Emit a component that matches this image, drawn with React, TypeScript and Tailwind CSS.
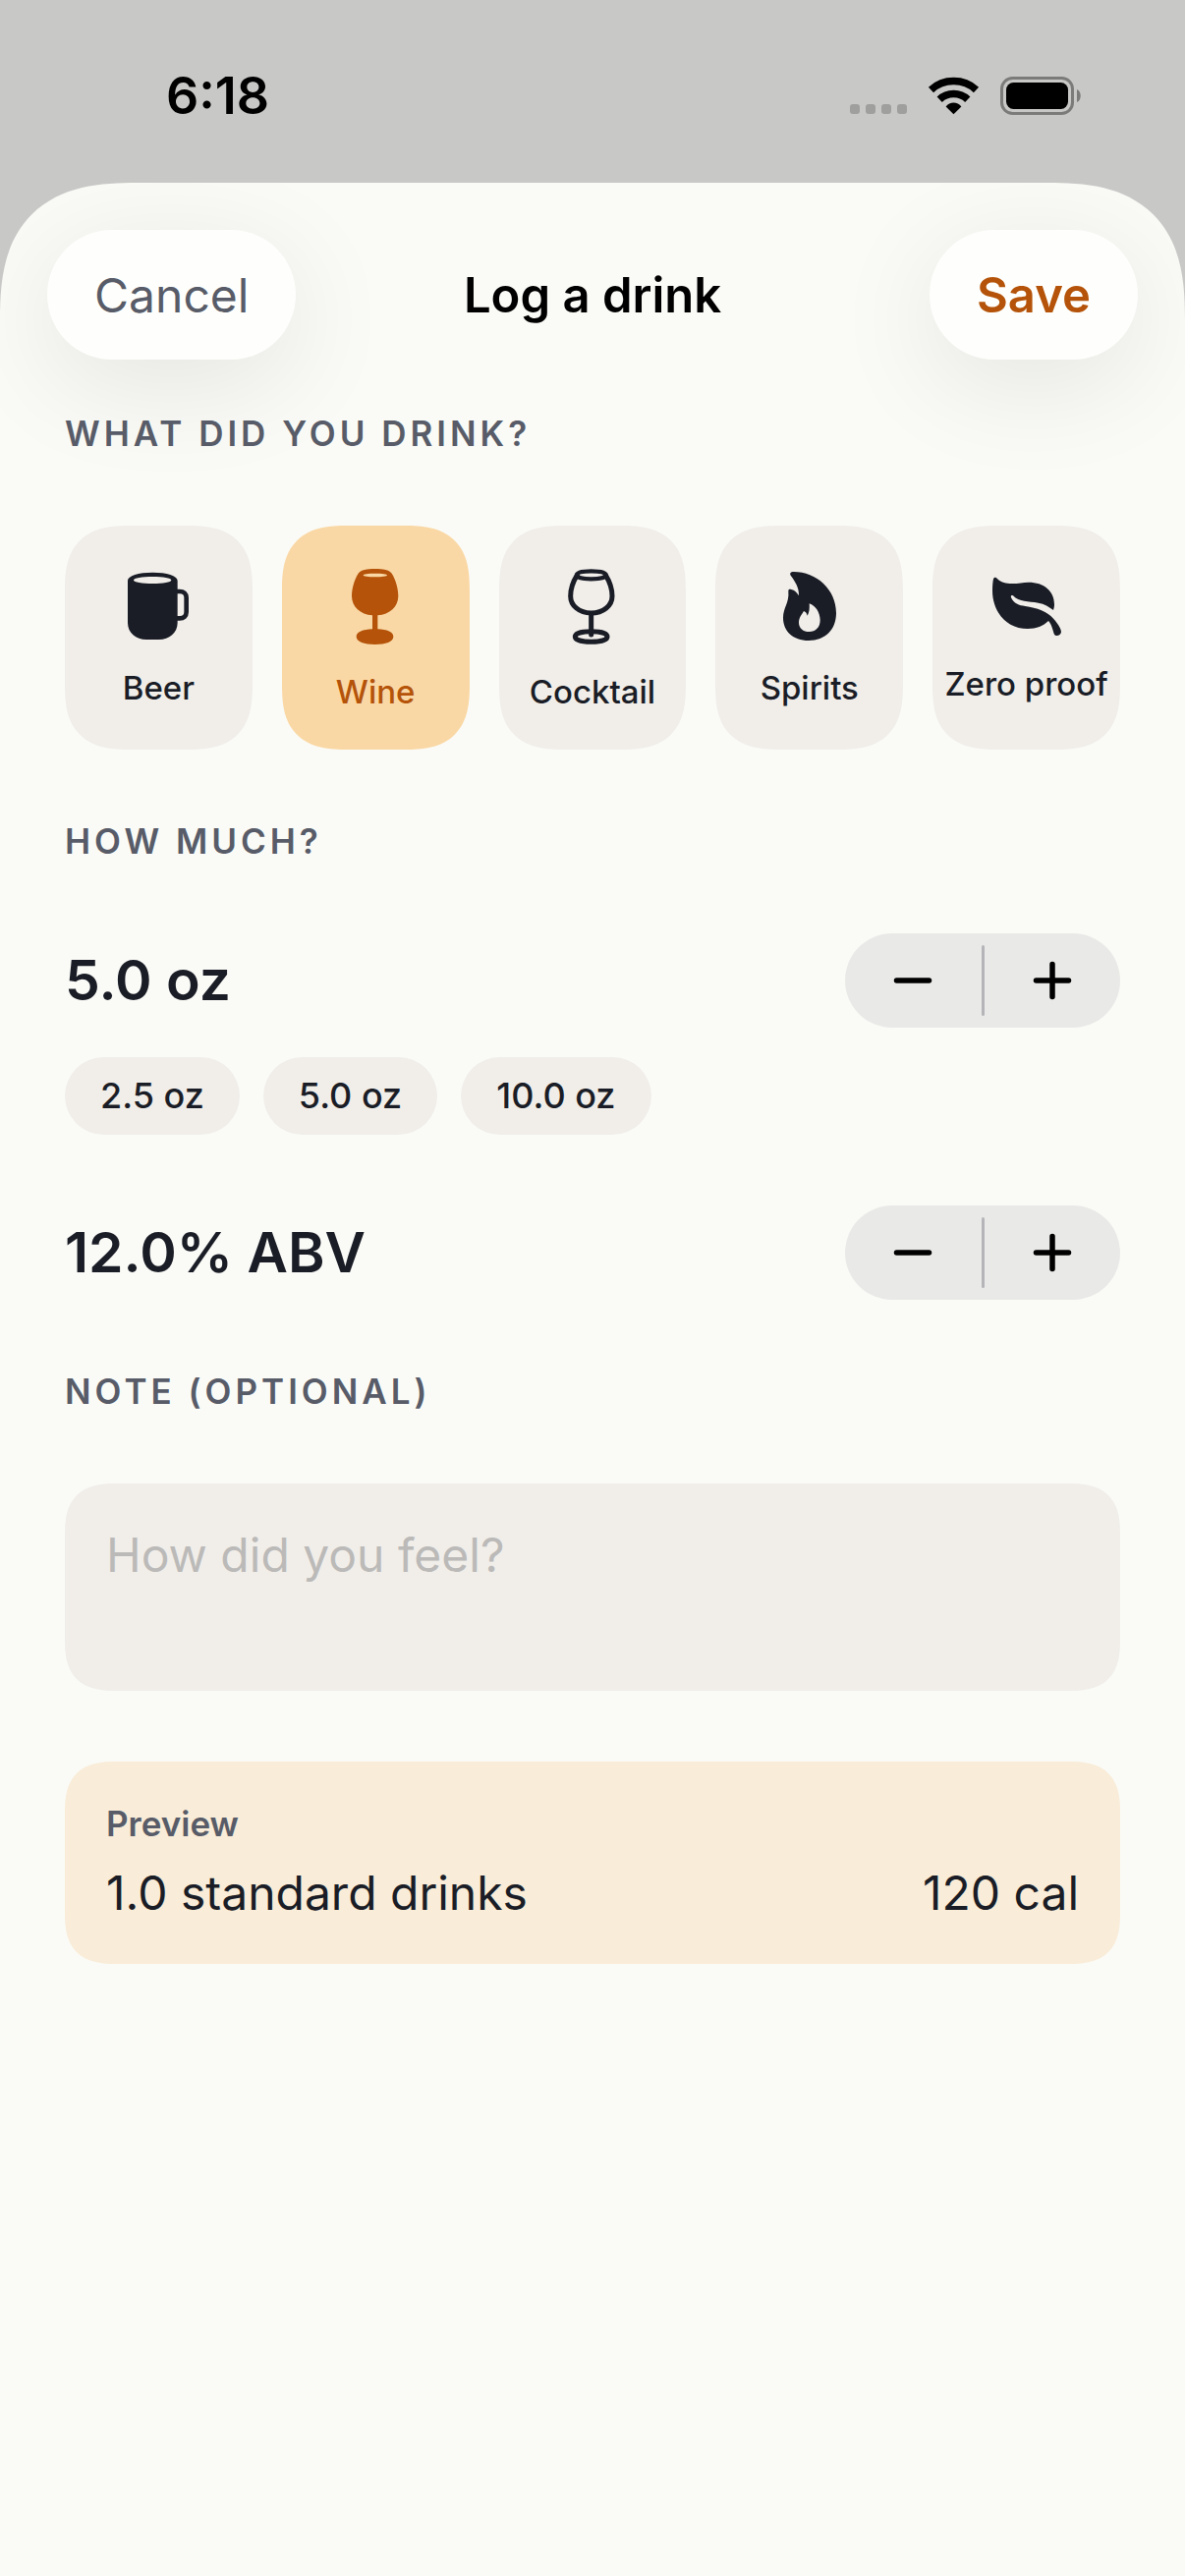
import React, { useState } from "react";
import clsx from "clsx";

const BeerIcon = () => (
  <svg className="w-[85px] h-[85px]" viewBox="0 0 255 255" fill="none">
    <path
      fill="currentColor"
      fillRule="evenodd"
      d="M33 39C33 24 66 14 109 14C152 14 185 24 185 39V168C185 198 160 219 128 219H90C58 219 33 198 33 168ZM51 37.500C51 44 77 48 109 48C141 48 166 44 166 37.500C166 31 141 27 109 27C77 27 51 31 51 37.500Z"
    />
    <path
      stroke="currentColor"
      strokeWidth="14"
      d="M183 72H192C204 72 212 80 212 91V135C212 147 204 154 192 154H183"
    />
  </svg>
);

const WineIcon = () => (
  <svg className="w-[85px] h-[93px]" viewBox="0 0 255 279" fill="currentColor">
    <path
      fillRule="evenodd"
      d="M125 15C150 15 168 18 175 28C190 50 196 80 196 98C196 130 170 154 133 157V199C162 200 181 208 181 222C181 238 158 246 125 246C92 246 68 238 68 222C68 208 88 200 117 199V157C80 154 54 130 54 98C54 80 60 50 75 28C82 18 100 15 125 15ZM89 34.500C89 38 105 40 125 40C146 40 162 38 162 34.500C162 31 146 29 125 29C105 29 89 31 89 34.500Z"
    />
  </svg>
);

const CocktailIcon = () => (
  <svg
    className="w-[85px] h-[93px]"
    viewBox="0 0 255 279"
    fill="none"
    stroke="currentColor"
    strokeWidth="15"
    strokeLinecap="round"
  >
    <path d="M82 34C69 55 62 80 62 98C62 127 88 150 125 150C162 150 189 127 189 98C189 80 182 55 169 34" />
    <path
      strokeWidth="13"
      d="M81 34C81 25 100 22 125 22C150 22 170 25 170 34C170 42 150 46 125 46C100 46 81 42 81 34Z"
    />
    <path d="M125 154V216" />
    <path d="M76 222C76 212 97 206 125 206C154 206 174 212 174 222C174 232 154 238 125 238C97 238 76 232 76 222Z" />
  </svg>
);

const SpiritsIcon = () => (
  <svg className="w-[85px] h-[85px]" viewBox="0 0 255 255" fill="currentColor">
    <path
      fillRule="evenodd"
      d="M71 23C67 16 72 12 80 12C150 12 210 66 210 138C210 188 177 222 126 222C78 222 48 193 48 153C48 121 67 108 64 73C63 65 68 65 73 66C83 68 91 76 96 85C97 60 85 42 71 23ZM128 109C147 115 161 137 161 160C161 182 147 195 128 195C109 195 96 184 96 167C96 151 107 140 111 132C117 134 120 138 122 146C128 137 129 124 128 109Z"
    />
  </svg>
);

const LeafIcon = () => (
  <svg className="w-[85px] h-[77px]" viewBox="0 0 255 231" fill="currentColor">
    <path d="M27 22C28 17 34 15 38 20C48 32 62 36 84 36C104 36 118 32 134 32C182 32 213 59 213 99C213 107 212 111 210 117C197 107 183 98 164 95C134 90 106 93 87 73C83 70 79 73 81 79C89 97 106 103 124 105C160 110 192 121 211 144C224 159 234 174 234 184C233 196 215 199 212 189C208 176 204 159 195 150C179 166 159 174 132 174C69 174 24 124 24 57C24 44 25 32 27 22Z" />
  </svg>
);

const drinks = [
  { name: "Beer", icon: BeerIcon },
  { name: "Wine", icon: WineIcon },
  { name: "Cocktail", icon: CocktailIcon },
  { name: "Spirits", icon: SpiritsIcon },
  { name: "Zero proof", icon: LeafIcon },
];

const presets = [2.5, 5, 10];

const StatusBar = () => (
  <div className="h-[186px] flex items-start justify-between pl-[169px] pr-[105px] pt-[67px]">
    <span className="text-[52px] leading-[62px] font-semibold text-black">
      6:18
    </span>
    <svg className="w-[236px] h-[40px] mt-[11px]" viewBox="0 0 236 40">
      {/* Cellular */}
      <g fill="#9f9f9e">
        <rect x="0" y="28" width="10" height="10" rx="3" />
        <rect x="16" y="28" width="10" height="10" rx="3" />
        <rect x="32" y="28" width="10" height="10" rx="3" />
        <rect x="48" y="28" width="10" height="10" rx="3" />
      </g>
      {/* Wifi */}
      <path d="M105.500 38.200L97.600 30.500C101.500 25 109.500 25 113.400 30.500Z" />
      <g fill="none" stroke="#000" strokeWidth="7.500">
        <path d="M82.500 13.500C95 1.600 116 1.600 128.500 13.500" />
        <path d="M91.200 23.200C99 15.600 112 15.600 119.800 23.200" />
      </g>
      {/* Battery */}
      <rect x="154.500" y="1.500" width="72" height="36" rx="11" fill="none" stroke="#7b7b7a" strokeWidth="3" />
      <rect x="159" y="6" width="63" height="27" rx="7.500" />
      <path d="M231 13C236 15 236 24 231 26Z" fill="#7b7b7a" />
    </svg>
  </div>
);

type StepperProps = {
  label: string;
  onMinus: () => void;
  onPlus: () => void;
};

const Stepper: React.FC<StepperProps> = ({ label, onMinus, onPlus }) => (
  <div className="flex items-center w-[280px] h-24 rounded-full bg-[#e9e9e7]">
    <button
      type="button"
      aria-label={`Decrease ${label}`}
      className="flex-1 h-full flex items-center justify-center"
      onClick={onMinus}
    >
      <svg className="w-10 h-10" viewBox="0 0 40 40" fill="none" stroke="#000" strokeWidth="5.500" strokeLinecap="round">
        <path d="M3.500 20H36.500" />
      </svg>
    </button>
    <span className="w-[3px] h-[72px] rounded-full bg-[#b5b5b9]" />
    <button
      type="button"
      aria-label={`Increase ${label}`}
      className="flex-1 h-full flex items-center justify-center"
      onClick={onPlus}
    >
      <svg className="w-10 h-10" viewBox="0 0 40 40" fill="none" stroke="#000" strokeWidth="5.500" strokeLinecap="round">
        <path d="M3.500 20H36.500M20 3.500V36.500" />
      </svg>
    </button>
  </div>
);

const sectionLabel =
  "block text-[35px] leading-[43px] font-semibold tracking-[4px] uppercase text-[#585c68]";
const navButton =
  "h-[132px] px-12 rounded-full bg-[#fefffc] leading-[61px] shadow-[0_24px_112px_rgba(0,0,0,0.09)]";
// softer corners where the browser can draw them
const card =
  "rounded-[42px] supports-[corner-shape:round]:rounded-[52px] [corner-shape:superellipse(1.4)]";

export default function App() {
  const [drink, setDrink] = useState("Wine");
  const [volume, setVolume] = useState(5);
  const [abv, setAbv] = useState(12);
  const [note, setNote] = useState("");

  // one standard drink is 0.6 oz of pure alcohol
  const standard = (volume * abv) / 100 / 0.6;

  return (
    <div className="min-h-screen flex flex-col bg-[#c8c8c6] font-['Inter','Liberation_Sans',sans-serif] text-[#1a1d26]">
      <StatusBar />

      <div className="flex-1 bg-[#fafbf7] rounded-t-[114px] supports-[corner-shape:round]:rounded-t-[140px] [corner-shape:superellipse(1.4)] overflow-hidden">
        {/* Header */}
        <header className="grid grid-cols-[1fr_auto_1fr] items-center px-12 pt-12">
          <button type="button" className={clsx(navButton, "justify-self-start text-[48px] text-[#585c68]")}>
            Cancel
          </button>
          <h1 className="text-[49px] leading-[61px] font-semibold text-black">
            Log a drink
          </h1>
          <button type="button" className={clsx(navButton, "justify-self-end text-[49px] font-semibold text-[#b45309]")}>
            Save
          </button>
        </header>

        <main className="relative flex flex-col gap-18 px-[66px] pt-[54px] pb-24">
          <h2 className={sectionLabel}>What did you drink?</h2>

          {/* Drink type */}
          <div className="grid grid-cols-5 gap-[30px]">
            {drinks.map(({ name, icon: Icon }) => (
              <button
                key={name}
                type="button"
                aria-pressed={drink === name}
                className={clsx(
                  "h-[228px] flex flex-col items-center justify-center gap-[18px] rounded-[54px] supports-[corner-shape:round]:rounded-[66px] [corner-shape:superellipse(1.4)]",
                  drink === name
                    ? "bg-[#fad8a5] text-[#b45309]"
                    : "bg-[#f1eeea]"
                )}
                onClick={() => setDrink(name)}
              >
                <Icon />
                <span className="text-[33px] leading-[39px] font-medium whitespace-nowrap">
                  {name}
                </span>
              </button>
            ))}
          </div>

          <h2 className={sectionLabel}>How much?</h2>

          {/* Volume */}
          <div className="flex flex-col gap-[30px]">
            <div className="flex items-center justify-between">
              <span className="text-[57px] leading-[72px] font-semibold">
                {volume.toFixed(1)} oz
              </span>
              <Stepper
                label="volume"
                onMinus={() => setVolume((v) => Math.max(0.5, v - 0.5))}
                onPlus={() => setVolume((v) => v + 0.5)}
              />
            </div>
            <div className="flex gap-6">
              {presets.map((oz) => (
                <button
                  key={oz}
                  type="button"
                  className="px-9 py-[18px] rounded-full bg-[#f1eeea] text-[36px] leading-[43px] font-medium"
                  onClick={() => setVolume(oz)}
                >
                  {oz.toFixed(1)} oz
                </button>
              ))}
            </div>
          </div>

          {/* Strength */}
          <div className="flex items-center justify-between">
            <span className="text-[57px] leading-[72px] font-semibold">
              {abv.toFixed(1)}% ABV
            </span>
            <Stepper
              label="ABV"
              onMinus={() => setAbv((a) => Math.max(0, a - 0.5))}
              onPlus={() => setAbv((a) => a + 0.5)}
            />
          </div>

          <label htmlFor="note" className={sectionLabel}>
            Note (optional)
          </label>
          <textarea
            id="note"
            rows={2}
            className={clsx(
              card,
              "block w-full min-h-[211px] resize-none bg-[#f1eeea] p-[42px] text-[48px] leading-[61px] placeholder:text-[#bbbab8] outline-none"
            )}
            placeholder="How did you feel?"
            value={note}
            onChange={(e) => setNote(e.target.value)}
          />

          {/* Preview */}
          <section className={clsx(card, "flex flex-col gap-[18px] bg-[#f9ecd8] p-[42px]")}>
            <h3 className="text-[35px] leading-[43px] font-semibold text-[#585c68]">
              Preview
            </h3>
            <div className="flex justify-between text-[48px] leading-[61px]">
              <span>{standard.toFixed(1)} standard drinks</span>
              <span>{Math.round(standard * 120)} cal</span>
            </div>
          </section>
        </main>
      </div>
    </div>
  );
}
